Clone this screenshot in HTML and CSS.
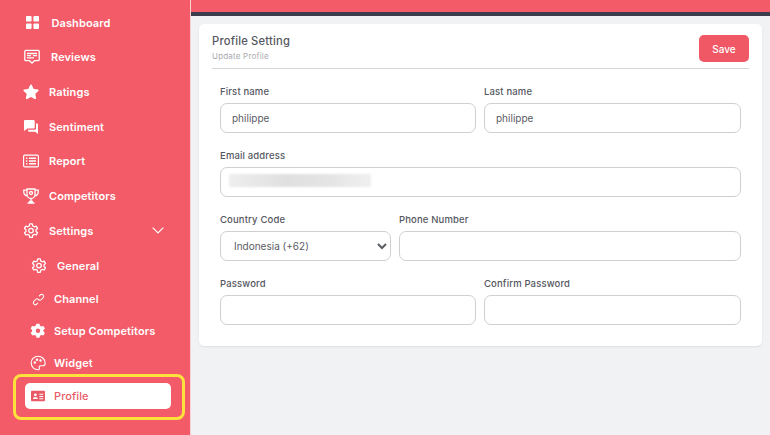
FILE: index.html
```html
<!DOCTYPE html>
<html lang="en">
<head>
    <meta charset="UTF-8">
    <meta name="viewport" content="width=device-width, initial-scale=1.0">
    <title>Profile Setting</title>
    <link rel="stylesheet" href="styles.css">
</head>
<body>
    <aside class="sidebar">
        <nav class="nav">
            <a class="nav-item item-wide">
                <svg class="icon icon-dash" viewBox="0 0 14 14" fill="#fff"><rect x="0" y="0" width="6" height="6" rx="1"/><rect x="8" y="0" width="6" height="6" rx="1"/><rect x="0" y="8" width="6" height="6" rx="1"/><rect x="8" y="8" width="6" height="6" rx="1"/></svg>
                <span>Dashboard</span>
            </a>
            <a class="nav-item item-wide">
                <svg class="icon icon-reviews" viewBox="0 0 16 15" fill="none" stroke="#fff" stroke-width="1.3"><path d="M2 .8h12a1.2 1.2 0 0 1 1.2 1.2v8a1.2 1.2 0 0 1-1.2 1.2h-3.600L8 13.600 5.600 11.200H2A1.200 1.200 0 0 1 .8 10V2A1.200 1.200 0 0 1 2 .8z"/><path d="M3 4h10M3 6.200h4M9 6.200h4M3 8.400h7"/></svg>
                <span>Reviews</span>
            </a>
            <a class="nav-item">
                <svg class="icon" viewBox="0 0 16 16" fill="#fff" stroke="#fff" stroke-width="1.800" stroke-linejoin="round"><path d="M8 1.400l2 4.300 4.700.6-3.400 3.200.9 4.700L8 11.900l-4.200 2.300.9-4.700L1.300 6.300 6 5.700z"/></svg>
                <span>Ratings</span>
            </a>
            <a class="nav-item">
                <svg class="icon" viewBox="0 0 16 16" fill="#fff"><path d="M2 1h8.500a1.200 1.200 0 0 1 1.200 1.200v6a1.200 1.200 0 0 1-1.200 1.200H4.500L1 12V2a1 1 0 0 1 1-1z"/><path d="M13 4.500h1.300A.8.8 0 0 1 15 5.300V15l-2.800-2.300H6a.9.9 0 0 1-.9-.9v-1h6.600A1.300 1.300 0 0 0 13 9.500z"/></svg>
                <span>Sentiment</span>
            </a>
            <a class="nav-item">
                <svg class="icon" viewBox="0 0 16 16" fill="none" stroke="#fff" stroke-width="1.200"><rect x=".6" y="2.100" width="14.800" height="11.800" rx="1.200"/><path d="M3 5.200h1.400M3 8h1.400M3 10.800h1.400M6 5.200h7M6 8h7M6 10.800h7" stroke-width="1.500"/></svg>
                <span>Report</span>
            </a>
            <a class="nav-item">
                <svg class="icon" viewBox="0 0 16 16" fill="none" stroke="#fff" stroke-width="1.300"><path d="M4 1h8v5.500a4 4 0 0 1-8 0z"/><path d="M4 2.200H.8v2A3.500 3.500 0 0 0 4.300 7.700M12 2.200h3.200v2a3.500 3.500 0 0 1-3.500 3.500M8 10.500v3M4.500 15h7M6 13.500h4"/><circle cx="8" cy="5" r="1.500"/></svg>
                <span>Competitors</span>
            </a>
            <a class="nav-item">
                <svg class="icon" viewBox="0 0 16 16" fill="none" stroke="#fff" stroke-width="1.300" stroke-linejoin="round"><path d="M6.700.9h2.600l.4 2 1.500.9 2-.7 1.300 2.300-1.500 1.300v1.700l1.500 1.400-1.300 2.200-2-.6-1.500.8-.4 2.100H6.700l-.4-2.100-1.500-.8-2 .6L1.500 9.800 3 8.400V6.700L1.500 5.400l1.300-2.300 2 .7 1.500-.9z"/><circle cx="8" cy="7.600" r="2.300"/></svg>
                <span>Settings</span>
                <svg class="chevron" viewBox="0 0 12 7" fill="none" stroke="#fff" stroke-width="1.200"><path d="M.7.700L6 6l5.300-5.300"/></svg>
            </a>
            <div class="sub-nav">
                <a class="nav-item sub-item item-general">
                    <svg class="icon" viewBox="0 0 16 16" fill="none" stroke="#fff" stroke-width="1.300" stroke-linejoin="round"><path d="M6.700.9h2.600l.4 2 1.500.9 2-.7 1.300 2.300-1.500 1.300v1.700l1.500 1.400-1.300 2.200-2-.6-1.500.8-.4 2.100H6.700l-.4-2.100-1.500-.8-2 .6L1.500 9.800 3 8.400V6.700L1.500 5.400l1.300-2.300 2 .7 1.500-.9z"/><circle cx="8" cy="7.600" r="2.300"/></svg>
                    <span>General</span>
                </a>
                <a class="nav-item sub-item item-channel">
                    <svg class="icon" viewBox="0 0 16 16" fill="none" stroke="#fff" stroke-width="1.300" stroke-linecap="round"><path d="M9 3.500l1.300-1.300a2.500 2.500 0 0 1 3.500 3.500l-2.300 2.300a2.500 2.500 0 0 1-3.500 0"/><path d="M7 12.500l-1.300 1.300a2.500 2.500 0 0 1-3.500-3.500l2.300-2.300a2.500 2.500 0 0 1 3.500 0"/></svg>
                    <span>Channel</span>
                </a>
                <a class="nav-item sub-item">
                    <svg class="icon" viewBox="0 0 16 16"><path fill="#fff" fill-rule="evenodd" d="M6.500.8h3l.5 2 1.400.8 2-.6 1.500 2.600-1.500 1.400v1.600l1.500 1.400-1.500 2.600-2-.6-1.400.8-.5 2h-3l-.5-2-1.400-.8-2 .6L.6 10l1.500-1.400V7L.6 5.600 2.100 3l2 .6L5.500 2.800zM8 5.600a2.200 2.200 0 1 0 0 4.400 2.200 2.200 0 0 0 0-4.400z"/></svg>
                    <span>Setup Competitors</span>
                </a>
                <a class="nav-item sub-item">
                    <svg class="icon" viewBox="0 0 16 16" fill="none" stroke="#fff" stroke-width="1.100"><path d="M8 1.200a6.800 6.800 0 1 0 0 13.600c1.300 0 1.700-.9 1.300-1.800-.5-1.100 0-2.200 1.300-2.200h2.200c1.300 0 2.400-.9 2.400-2.600 0-3.900-3.200-7-7.200-7z"/><circle cx="4.800" cy="7.500" r=".7" fill="#fff"/><circle cx="7" cy="4.700" r=".7" fill="#fff"/><circle cx="10.500" cy="5.500" r=".7" fill="#fff"/></svg>
                    <span>Widget</span>
                </a>
            </div>
            <div class="highlight">
                <a class="nav-item sub-item active">
                    <svg class="icon" viewBox="0 0 16 14"><path fill="#e95a67" fill-rule="evenodd" d="M1.500 1h13A1.300 1.300 0 0 1 16 2.300v9.400a1.300 1.300 0 0 1-1.500 1.300h-13A1.300 1.300 0 0 1 0 11.700V2.300A1.300 1.300 0 0 1 1.500 1zM5 4a1.700 1.700 0 1 0 0 3.400A1.700 1.700 0 0 0 5 4zM2.200 10.500h5.600c0-1.500-1.200-2.400-2.800-2.400s-2.800.9-2.800 2.400zM9.500 4.500v1.200h4.500V4.500zm0 2.500v1.200h4.500V7zm0 2.500v1.200h4.500V9.500z"/></svg>
                    <span>Profile</span>
                </a>
            </div>
        </nav>
    </aside>

    <main class="main">
        <div class="topbar"></div>
        <section class="card">
            <div class="card-head">
                <div>
                    <h1>Profile Setting</h1>
                    <p>Update Profile</p>
                </div>
                <button class="btn-save" type="button">Save</button>
            </div>
            <form class="form">
                <div class="row">
                    <div class="field field-half">
                        <label for="firstName">First name</label>
                        <input type="text" id="firstName" value="philippe">
                    </div>
                    <div class="field">
                        <label for="lastName">Last name</label>
                        <input type="text" id="lastName" value="philippe">
                    </div>
                </div>
                <div class="row">
                    <div class="field">
                        <label for="email">Email address</label>
                        <input type="text" id="email">
                        <span class="blurred"></span>
                    </div>
                </div>
                <div class="row">
                    <div class="field">
                        <label for="country">Country Code</label>
                        <select id="country">
                            <option>Indonesia (+62)</option>
                        </select>
                    </div>
                    <div class="field field-phone">
                        <label for="phone">Phone Number</label>
                        <input type="text" id="phone">
                    </div>
                </div>
                <div class="row">
                    <div class="field field-half">
                        <label for="password">Password</label>
                        <input type="password" id="password">
                    </div>
                    <div class="field">
                        <label for="confirm">Confirm Password</label>
                        <input type="password" id="confirm">
                    </div>
                </div>
            </form>
        </section>
    </main>
</body>
</html>
```

FILE: styles.css
```css
* {
    box-sizing: border-box;
}

html, body {
    height: 100%;
}

body {
    margin: 0;
    display: flex;
    overflow: hidden;
    font-family: 'Inter', 'Liberation Sans', sans-serif;
    background: #f1f2f4;
    color: #4a4c55;
}

.sidebar {
    width: 191px;
    flex-shrink: 0;
    background: #f25b67;
    border-right: 1px solid #fbd3d6;
    padding-top: 5.4px;
}

.nav-item {
    display: flex;
    align-items: center;
    height: 34.7px;
    padding-left: 23px;
    color: #fff;
    font-size: 11px;
    font-weight: 600;
    letter-spacing: 0.1px;
}

.icon {
    width: 16px;
    height: 16px;
    margin-right: 10px;
    flex-shrink: 0;
}

.item-wide {
    padding-left: 24px;
}

.item-wide .icon {
    margin-right: 11px;
}

.icon-dash {
    width: 13px;
    height: 13px;
}

.item-wide .icon-dash {
    margin: 0 12.500px 0 2px;
}

.chevron {
    width: 12px;
    height: 7px;
    margin-left: auto;
    margin-right: 26px;
}

.sub-nav {
    padding-top: 1px;
}

.sub-item {
    height: 32px;
    padding-left: 30px;
}

.sub-item .icon {
    margin-right: 8px;
}

.item-general {
    height: 34px;
    padding-left: 31px;
}

.item-general .icon {
    margin-right: 10px;
}

.item-channel {
    padding-left: 32px;
}

.item-channel .icon {
    width: 13px;
    height: 13px;
    margin-right: 9px;
}

.highlight {
    margin: -5.600px 0 0 13px;
    width: 172px;
    height: 46px;
    border: 3px solid #fde13d;
    border-radius: 8px;
    padding: 6px 11px 0 9px;
}

.active {
    height: 26px;
    padding-left: 6px;
    background: #fff;
    border-radius: 5px;
    color: #e95a67;
    font-weight: 500;
}

.active .icon {
    height: 14px;
    width: 14px;
    margin-right: 9px;
}

.main {
    flex: 1;
    min-width: 0;
}

.topbar {
    height: 16px;
    background: #f25b67;
    border-bottom: 4px solid #3b3d4c;
}

.card {
    margin: 8px 8px 0;
    padding: 11px 13px 21px;
    background: #fff;
    border-radius: 5px;
    box-shadow: 0 1px 2px rgba(0, 0, 0, 0.08);
}

.card-head {
    display: flex;
    justify-content: space-between;
    align-items: flex-start;
    height: 34px;
    border-bottom: 1px solid #d6d6d6;
}

h1 {
    margin: 0;
    font-size: 11.200px;
    line-height: 12px;
    font-weight: 500;
    letter-spacing: 0.2px;
    color: #55575f;
}

.card-head p {
    margin: 4px 0 0;
    font-size: 8px;
    line-height: 11px;
    letter-spacing: 0.2px;
    color: #a9abb0;
}

.btn-save {
    width: 50px;
    height: 27px;
    background: #ef5864;
    border: none;
    border-radius: 5px;
    color: #fff;
    font-family: inherit;
    font-size: 10px;
    font-weight: 500;
}

.form {
    padding: 16px 8px 0;
}

.row {
    display: flex;
    gap: 8px;
    margin-bottom: 16px;
}

.row:last-child {
    margin-bottom: 0;
}

.field {
    flex: 1;
    min-width: 0;
    position: relative;
}

.field-half {
    flex: 0 0 256px;
}

.field-phone {
    flex: 2;
}

label {
    display: block;
    height: 18px;
    line-height: 14px;
    font-size: 9.500px;
    font-weight: 500;
    letter-spacing: 0.15px;
    color: #55575f;
}

input, select {
    display: block;
    width: 100%;
    height: 30px;
    padding: 0 11px;
    background: #fff;
    border: 1px solid #cfcfcf;
    border-radius: 7px;
    font-family: inherit;
    font-size: 10px;
    color: #5a5c64;
    outline: none;
}

select {
    padding-left: 9px;
}

.blurred {
    position: absolute;
    left: 9px;
    top: 25px;
    width: 142px;
    height: 13px;
    background: linear-gradient(to right, #eeeeee, #e0e0e0 40%, #e4e4e4 70%, #f0f0f0);
    filter: blur(1px);
}
```
